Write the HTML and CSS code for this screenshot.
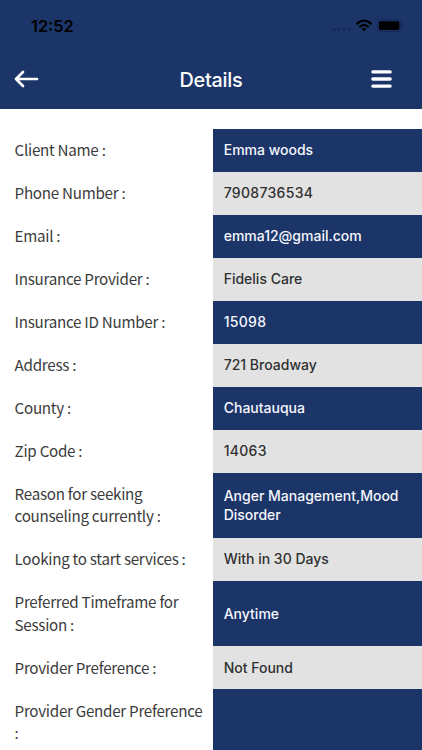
FILE: index.html
```html
<!DOCTYPE html>
<html lang="en">
<head>
<meta charset="utf-8">
<title>Details</title>
<link rel="stylesheet" href="styles.css">
</head>
<body>
<header class="header">
  <div class="status">
    <span class="time">12:52</span>
    <svg class="indicators" width="74" height="14" viewBox="0 0 74 14">
      <g fill="#152a59"><circle cx="3" cy="10.6" r="1.8"/><circle cx="8" cy="10.6" r="1.8"/><circle cx="13" cy="10.6" r="1.8"/><circle cx="18" cy="10.6" r="1.8"/></g>
      <g fill="none" stroke="#000" stroke-width="2.2"><path d="M25.6 5.1Q33 -1.7 40.4 5.1"/><path d="M28.4 8Q33 3.7 37.6 8"/></g>
      <path d="M30.5 9.8Q33 7.7 35.5 9.8L33 12.4Z"/>
      <rect x="46.5" y=".8" width="23.4" height="11.6" rx="3" fill="none" stroke="#142754"/>
      <rect x="48" y="2.3" width="20.4" height="8.7" rx="1.4"/>
      <path d="M71.2 4.7Q73 5.3 73 6.6T71.2 8.5Z" fill="#142754"/>
    </svg>
  </div>
  <nav class="nav">
    <svg class="back" width="26" height="20" viewBox="0 0 26 20"><path d="M24 10H3M10 3L3 10L10 17" fill="none" stroke="#fff" stroke-width="2.7" stroke-linecap="round" stroke-linejoin="round"/></svg>
    <h1 class="title">Details</h1>
    <svg class="menu" width="21" height="18" viewBox="0 0 21 18"><path d="M1.9 1.9H19.1M1.9 9H19.1M1.9 16.1H19.1" stroke="#fff" stroke-width="3.4" stroke-linecap="round"/></svg>
  </nav>
</header>
<dl class="details">
  <div class="row"><dt>Client Name :</dt><dd>Emma woods</dd></div>
  <div class="row"><dt>Phone Number :</dt><dd class="numeric">7908736534</dd></div>
  <div class="row"><dt>Email :</dt><dd>emma12@gmail.com</dd></div>
  <div class="row"><dt>Insurance Provider :</dt><dd>Fidelis Care</dd></div>
  <div class="row"><dt>Insurance ID Number :</dt><dd class="numeric">15098</dd></div>
  <div class="row"><dt>Address :</dt><dd>721 Broadway</dd></div>
  <div class="row"><dt>County :</dt><dd>Chautauqua</dd></div>
  <div class="row"><dt>Zip Code :</dt><dd class="numeric">14063</dd></div>
  <div class="row"><dt>Reason for seeking<br>counseling currently :</dt><dd>Anger Management,Mood<br>Disorder</dd></div>
  <div class="row"><dt>Looking to start services :</dt><dd>With in 30 Days</dd></div>
  <div class="row"><dt>Preferred Timeframe for<br>Session :</dt><dd>Anytime</dd></div>
  <div class="row"><dt>Provider Preference :</dt><dd>Not Found</dd></div>
  <div class="row"><dt>Provider Gender Preference<br>:</dt><dd></dd></div>
</dl>
</body>
</html>
```
FILE: styles.css
```css
* { box-sizing: border-box; }
body {
  margin: 0;
  height: 750px;
  overflow: hidden;
  background: #fff;
  font-family: Inter, sans-serif;
}
.header {
  height: 108.5px;
  background: #1c3569;
  color: #fff;
}
.status {
  height: 51px;
  padding: 0 17px 0 31px;
  display: flex;
  align-items: center;
  justify-content: space-between;
}
.time {
  color: #000;
  font-size: 16.3px;
  font-weight: 600;
}
.nav {
  height: 56.4px;
  padding: 0 30px 0 13px;
  display: grid;
  grid-template-columns: 30px 1fr 21px;
  align-items: center;
}
.title {
  margin: 0;
  padding: 1px 0 0 8px;
  font-size: 19.8px;
  font-weight: 450;
  letter-spacing: -0.25px;
  text-align: center;
}
.details { margin: 20.5px 0 0; }
.row {
  display: grid;
  grid-template-columns: 213px 1fr;
}
dt {
  padding: 9.4px 0 11.17px 14.6px;
  color: #3b3b3b;
  font: 15.2px/22.4px "Noto Sans CJK SC", sans-serif;
  letter-spacing: -0.28px;
  white-space: nowrap;
}
dd {
  margin: 0;
  padding: 0 0 0.5px 10.7px;
  display: flex;
  align-items: center;
  background: #1c3569;
  color: #f5f7fc;
  font-size: 14px;
  font-weight: 500;
  line-height: 19.5px;
}
.numeric { letter-spacing: 0.3px; }
.row:nth-child(even) dd {
  background: #e2e2e2;
  color: #303030;
}
```
